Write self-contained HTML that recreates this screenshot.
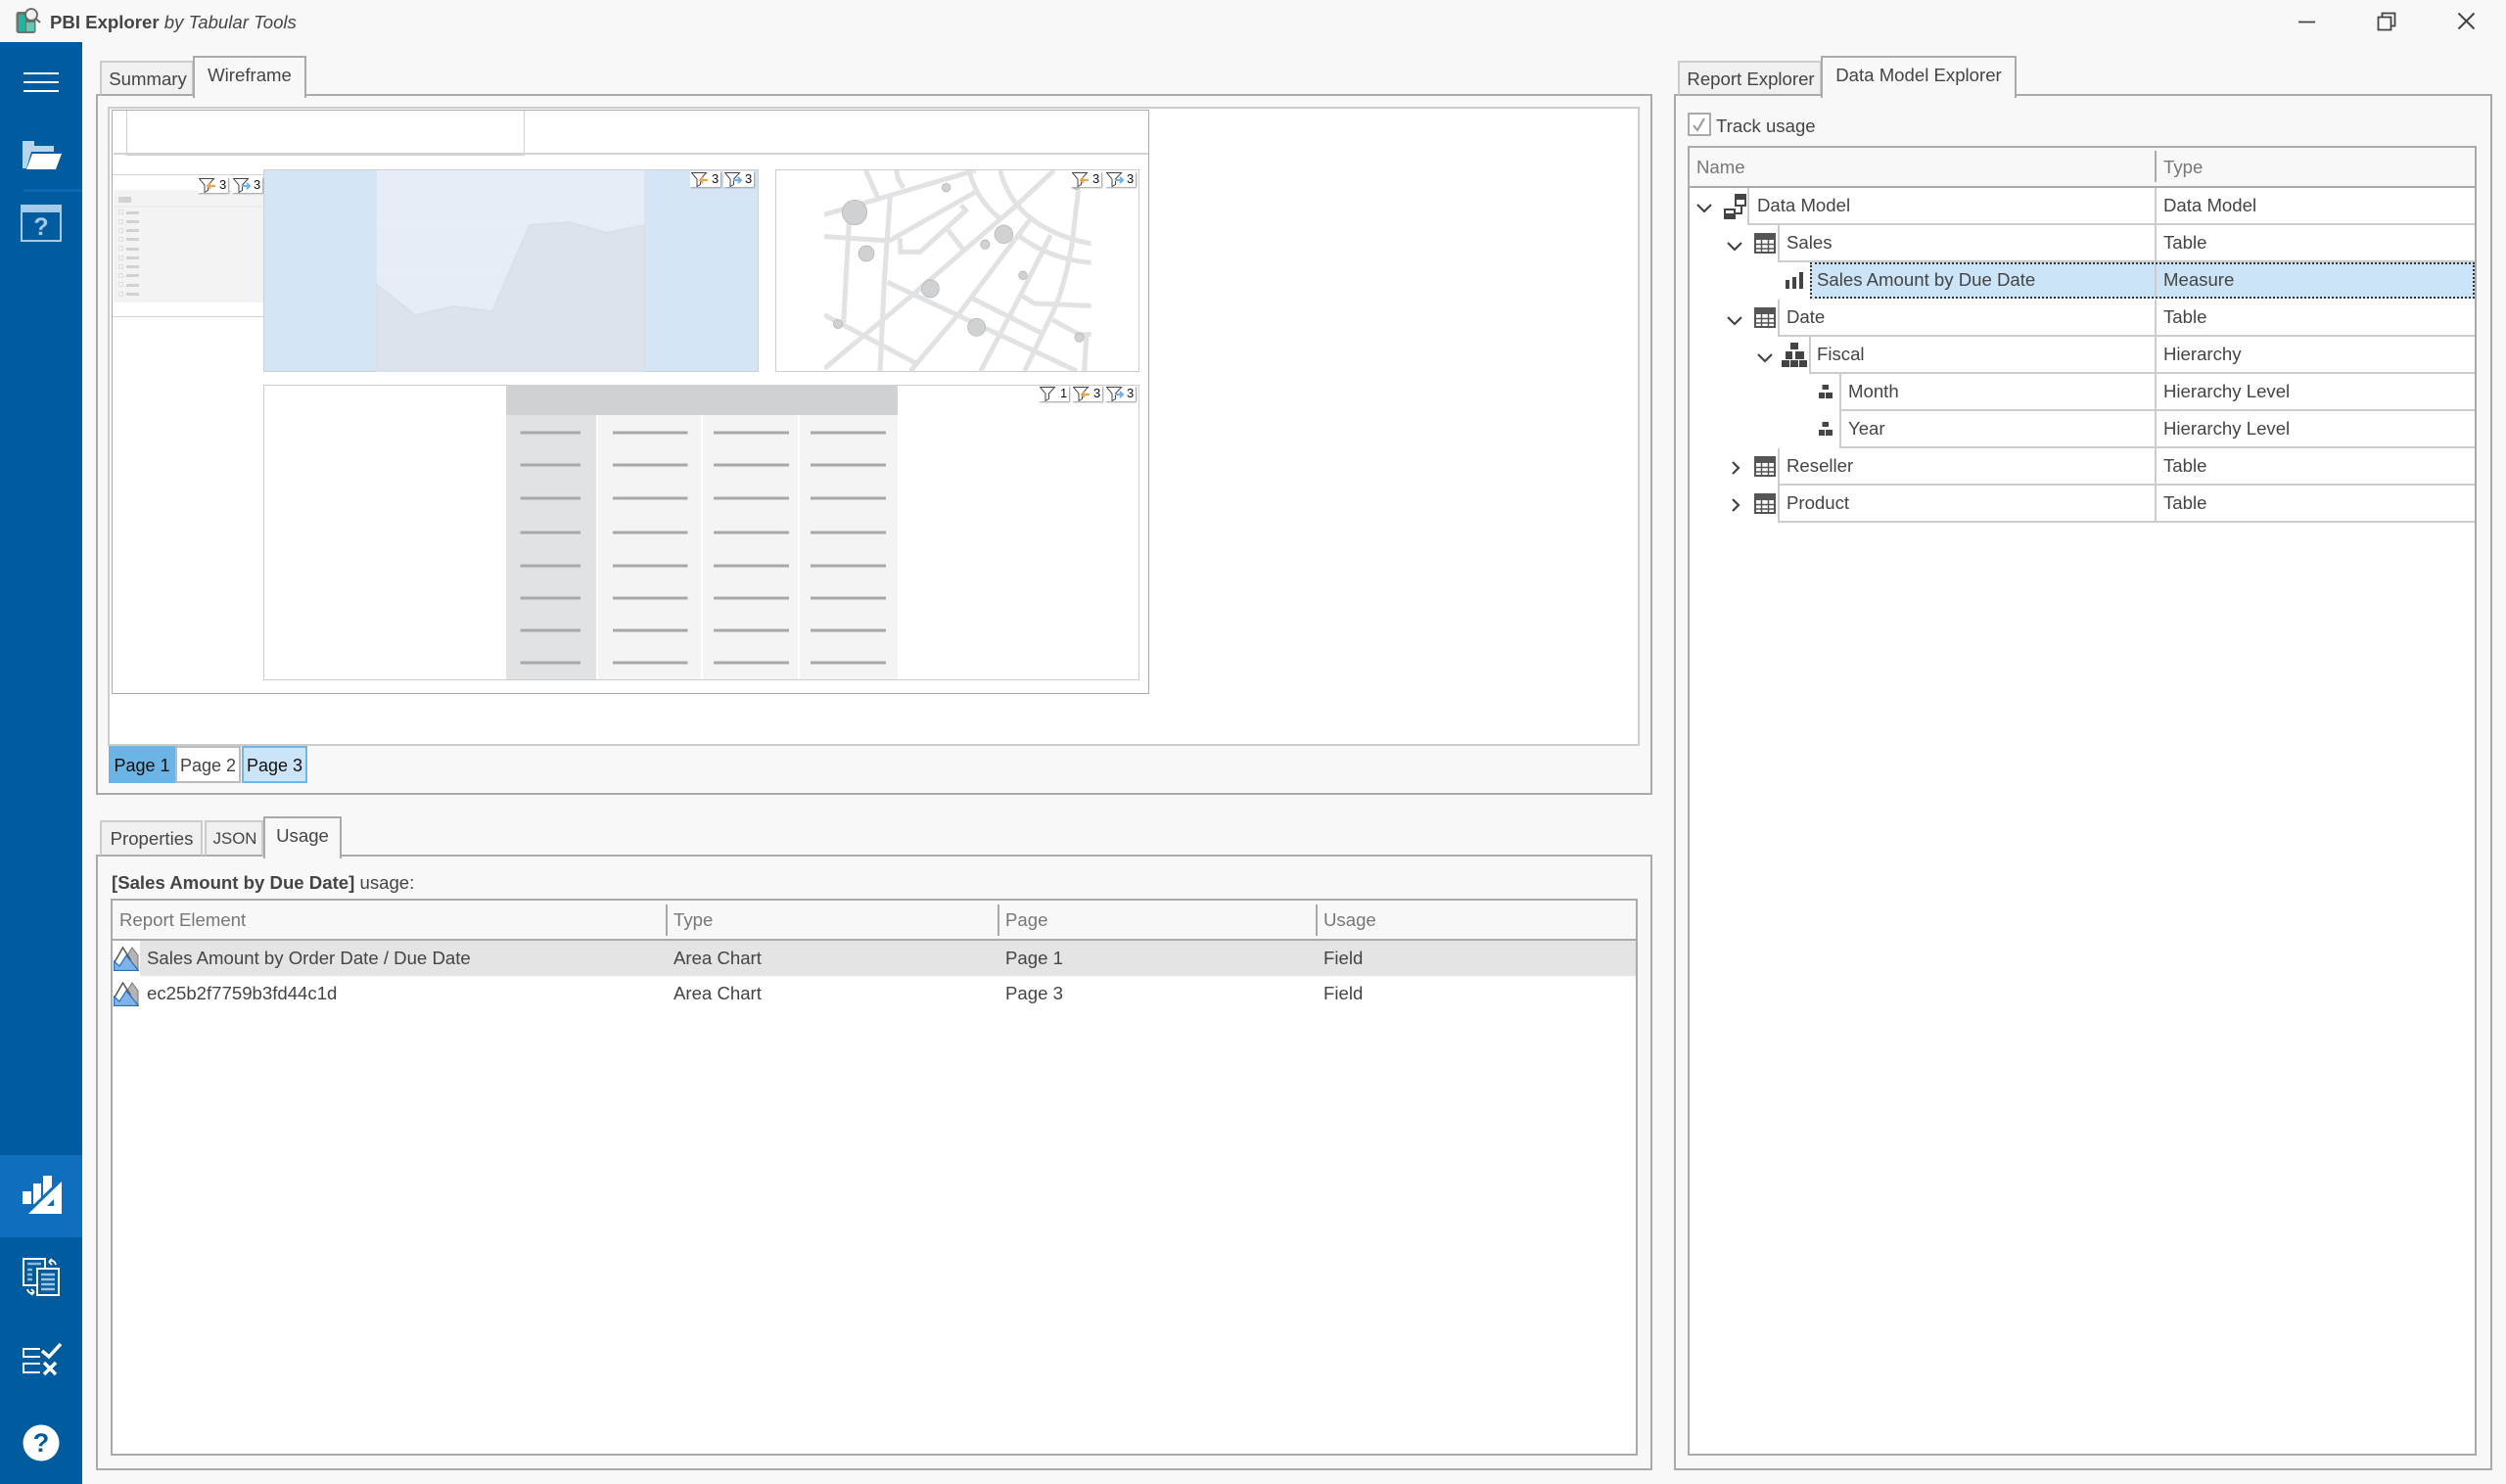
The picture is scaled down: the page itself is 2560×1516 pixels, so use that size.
<!DOCTYPE html>
<html><head><meta charset="utf-8"><title>PBI Explorer</title>
<style>
html,body{margin:0;padding:0;background:#f8f8f8}
#r{position:relative;width:2560px;height:1516px;overflow:hidden;background:#f8f8f8;font-family:"Liberation Sans",sans-serif;font-size:18.6px;color:#444}
#r div,#r svg,#r span.t{position:absolute;box-sizing:border-box}
.t{white-space:nowrap;line-height:26px;height:26px}
.h{color:#777}
.bx{border:2px solid #aaa}
.tab{background:#f0f0f0;border:2px solid #ccc;border-bottom:none;text-align:center;white-space:nowrap}
.tab.a{background:#f8f8f8;border:2.5px solid #aaa;border-bottom:none;z-index:3;line-height:36px;height:43px}
.w{background:#fff}
.b{width:31px;height:16px;background:#fff;box-shadow:1px 1px 1.5px #999;font-size:13px;line-height:16px;color:#111;z-index:4}
.b svg{left:1px;top:1px;width:22px;height:15px}
.b span{position:absolute;left:22px;top:0}
.l{height:3px;background:#a8a8a8}
.c{border-bottom:2px solid #ccc;border-left:2px solid #ccc;height:38px;background:#fff}
.s1{width:5px;height:5px;border:1px solid #ddd;left:121px}
.s2{width:13px;height:3px;background:#d2d2d2;left:129px}
</style></head><body><div id="r">
<svg width="0" height="0" style="left:0;top:0"><defs>
<g id="fl"><path d="M.5 .5H15.5L9.5 7V12.5L6 14.5V7Z" fill="#fff" stroke="#444" stroke-width="1"/></g>
<g id="tb"><rect x="1" y="1" width="20" height="19" fill="#fff" stroke="#555" stroke-width="2"/><rect x="1" y="1" width="20" height="6" fill="#555"/><path d="M7.5 7V20M14.5 7V20M1 11.5H21M1 16H21" stroke="#555" stroke-width="1.5" fill="none"/></g>
<g id="ar"><path d="M12 12L19 1L25 9V24H12Z" fill="#b4b4b4" stroke="#777"/><path d="M1 16L9.5 1L17 13V24H1Z" fill="#fff" stroke="#555" stroke-width="1.5"/><path d="M.5 24.5V15L6 20L13 9L25.500 24.500Z" fill="#7fb4e8" stroke="#2b6cb4" stroke-width="1.2"/></g>
<g id="lv"><path d="M3.500 0H10V5H3.500ZM0 8H6V14H0ZM7 8H14V14H7Z" fill="#444"/></g>
</defs></svg>

<!-- title bar -->
<svg style="left:14px;top:6px;width:30px;height:30px" viewBox="0 0 30 30"><rect x="2.500" y="6" width="20" height="22" rx="2.500" fill="#69736f"/><rect x="5" y="9" width="7" height="17" fill="#1fb49d"/><rect x="13" y="17" width="8" height="9" fill="#63c7b2"/><circle cx="18" cy="9" r="6" fill="#f0f0f0" stroke="#666" stroke-width="1.800"/><path d="M22.500 13L27 17" stroke="#666" stroke-width="2"/></svg>
<span class="t" style="left:51px;top:10px"><b>PBI Explorer</b> <i>by Tabular Tools</i></span>
<svg style="left:2340px;top:8px;width:200px;height:30px" viewBox="0 0 200 30" fill="none" stroke="#444" stroke-width="1.800"><path d="M8 14.500H25"/><path d="M89.500 9.500H102.500V22.500H89.500ZM93.500 9.500V5.500H106.500V18.500H102.500"/><path d="M171.500 5.500L187.500 21.500M187.500 5.500L171.500 21.500" stroke-width="2"/></svg>

<!-- sidebar -->
<div style="left:0;top:43px;width:84px;height:1473px;background:#005b9f"></div>
<div style="left:24px;top:74px;width:36px;height:2px;background:#fff"></div>
<div style="left:24px;top:83px;width:36px;height:2px;background:#fff"></div>
<div style="left:24px;top:92px;width:36px;height:2px;background:#fff"></div>
<svg style="left:20px;top:140px;width:46px;height:36px" viewBox="20 140 46 36"><path d="M23 144H35V149H55V155H32L27 172H23Z" fill="#b9d5ea"/><path d="M33 157H63L57 173H27Z" fill="#fff"/></svg>
<div style="left:24px;top:193px;width:60px;height:2.500px;background:#0f68b4"></div>
<div style="left:21px;top:209px;width:42px;height:38px;border:2px solid #a5cbea;background:#005b9f"></div>
<div style="left:21px;top:209px;width:42px;height:8px;background:#a5cbea"></div>
<div style="left:21px;top:217px;width:42px;height:30px;color:#a5cbea;font-weight:bold;font-size:25px;line-height:31px;text-align:center">?</div>
<div style="left:0;top:1180px;width:84px;height:84px;background:#106ebe"></div>
<svg style="left:0;top:1180px;width:84px;height:336px" viewBox="0 1180 84 336">
<path d="M23 1217H32V1230H23ZM34 1209H42V1230H34ZM44 1201H53V1225H44Z" fill="#fff"/>
<path d="M29 1240L63 1207V1240Z" fill="#106ebe" stroke="#106ebe" stroke-width="6"/>
<path d="M29 1240L63 1207V1240Z" fill="#fff"/><path d="M48 1232L55 1225V1232Z" fill="#106ebe"/>
<rect x="24" y="1286" width="22" height="27" fill="#005b9f" stroke="#fff" stroke-width="2"/>
<path d="M28 1291H42M28 1297H33M28 1302H33M28 1307H33" stroke="#8fb9dc" stroke-width="2.500"/>
<rect x="38" y="1296" width="22" height="27" fill="#005b9f" stroke="#fff" stroke-width="2"/>
<path d="M42 1302H56M42 1307H56M42 1312H56M42 1317H56" stroke="#9fc4e2" stroke-width="2.500"/>
<path d="M50 1289C53 1287 56 1288 57 1292M50 1289L53 1286M50 1289L53 1292" stroke="#fff" stroke-width="1.800" fill="none"/>
<path d="M35 1320C32 1322 29 1321 28 1317M35 1320L32 1317M35 1320L32 1323" stroke="#fff" stroke-width="1.800" fill="none"/>
<path d="M41 1378H24V1386H41M41 1393H24V1402H41" stroke="#fff" stroke-width="2" fill="none"/>
<path d="M43 1380L50 1386L62 1373M45 1392L57 1404M57 1392L45 1404" stroke="#fff" stroke-width="3.500" fill="none"/>
<circle cx="42" cy="1474" r="18.500" fill="#fff"/>
</svg>
<div style="left:23px;top:1459px;width:38px;height:30px;color:#005b9f;font-weight:bold;font-size:27px;line-height:30px;text-align:center">?</div>

<!-- top-left tabs & panel -->
<div class="bx" style="left:98px;top:96px;width:1590px;height:716px;border-width:2.500px"></div>
<div class="tab" style="left:102px;top:62px;width:96px;height:36px;line-height:33px;padding-left:2px;border-bottom:2.500px solid #aaa">Summary</div>
<div class="tab a" style="left:197px;top:57px;width:116px">Wireframe</div>
<div style="left:110px;top:109px;width:1565px;height:653px;background:#fff;border:2px solid #ccc"></div>

<!-- page -->
<div style="left:114px;top:112px;width:1060px;height:597px;background:#fff;border:1.500px solid #aaa"></div>
<div style="left:116px;top:156px;width:1057px;height:1.500px;background:#d2d2d2"></div>
<div style="left:129px;top:113px;width:407px;height:46px;border:1.500px solid #d2d2d2;border-top:none"></div>

<!-- slicer -->
<div style="left:115px;top:178px;width:155px;height:146px;border-top:1.500px solid #d2d2d2;border-bottom:1.500px solid #d2d2d2;background:#fff"></div>
<div style="left:116px;top:194px;width:153px;height:115px;background:#f3f3f3"></div>
<div style="left:116px;top:210px;width:153px;height:2px;background:#ececec"></div>
<div style="left:121px;top:201px;width:13px;height:6px;background:#d2d2d2"></div>
<div class="s1" style="top:214px"></div><div class="s2" style="top:216px"></div>
<div class="s1" style="top:224px"></div><div class="s2" style="top:225px"></div>
<div class="s1" style="top:233px"></div><div class="s2" style="top:234px"></div>
<div class="s1" style="top:242px"></div><div class="s2" style="top:243px"></div>
<div class="s1" style="top:251px"></div><div class="s2" style="top:253px"></div>
<div class="s1" style="top:261px"></div><div class="s2" style="top:262px"></div>
<div class="s1" style="top:270px"></div><div class="s2" style="top:271px"></div>
<div class="s1" style="top:279px"></div><div class="s2" style="top:280px"></div>
<div class="s1" style="top:288px"></div><div class="s2" style="top:290px"></div>
<div class="s1" style="top:298px"></div><div class="s2" style="top:299px"></div>
<div class="b" style="left:202px;top:181px"><svg viewBox="0 0 22 15"><use href="#fl"/><path d="M17 8H9M12 5L9 8L12 11" stroke="#e9a44c" stroke-width="2" fill="none"/></svg><span>3</span></div>
<div class="b" style="left:237px;top:181px"><svg viewBox="0 0 22 15"><use href="#fl"/><path d="M9 8H17M14 5L17 8L14 11" stroke="#6fb0ee" stroke-width="2" fill="none"/></svg><span>3</span></div>

<!-- area chart -->
<svg style="left:269px;top:173px;width:506px;height:207px" viewBox="269 173 506 207">
<rect x="269.500" y="173.500" width="505" height="206" fill="#d6e5f5" stroke="#c9d0d8"/>
<rect x="385" y="174" width="273" height="205" fill="#e6edf6"/>
<path d="M385 225H658M385 274H658" stroke="#ebf0f8" stroke-width="1"/>
<path d="M385 291L424.500 322L463 313L503 318L541 230L582 227L620 238L658 230V379H385Z" fill="#dce3ed" stroke="#d8e0ea" stroke-width="2"/>
</svg>
<div class="b" style="left:705px;top:175px"><svg viewBox="0 0 22 15"><use href="#fl"/><path d="M17 8H9M12 5L9 8L12 11" stroke="#e9a44c" stroke-width="2" fill="none"/></svg><span>3</span></div>
<div class="b" style="left:739px;top:175px"><svg viewBox="0 0 22 15"><use href="#fl"/><path d="M9 8H17M14 5L17 8L14 11" stroke="#6fb0ee" stroke-width="2" fill="none"/></svg><span>3</span></div>

<!-- map -->
<div style="left:792px;top:173px;width:372px;height:207px;border:1.500px solid #ccc;background:#fff"></div>
<svg style="left:780px;top:160px;width:400px;height:230px" viewBox="0 0 1200 690">
<clipPath id="mc"><rect x="186" y="42" width="818" height="615"/></clipPath>
<g clip-path="url(#mc)" fill="none" stroke="#e1e2e4" stroke-width="15">
<path d="M186 178L650 42"/><path d="M313 42L350 125"/><path d="M408 42Q408 70 430 95"/>
<path d="M388 120L370 380L357 657"/><path d="M262 200L245 510"/>
<path d="M186 245L385 258L650 108"/><path d="M605 148L620 165L480 292H420L418 250"/><path d="M565 225L612 285"/>
<path d="M186 650L455 425L780 145L890 42"/><path d="M630 42Q650 130 725 190"/><path d="M725 42Q770 220 1004 267"/>
<path d="M815 195L600 480L450 657"/><path d="M880 240L790 420L665 657"/><path d="M785 245Q880 315 1004 325"/>
<path d="M965 100L945 270Q920 410 885 480L800 657"/><path d="M380 385L960 657"/><path d="M635 432L860 545"/>
<path d="M790 425L830 450L1004 457"/><path d="M885 500L968 545H1004"/><path d="M990 545L983 657"/><path d="M186 485L465 632"/>
</g>
<g fill="#d0d1d3" stroke="#b0b0b0" stroke-width="2"><circle cx="279" cy="171" r="38"/><circle cx="315" cy="297" r="24"/><circle cx="560" cy="95" r="13"/><circle cx="736" cy="238" r="28"/><circle cx="679" cy="269" r="14"/><circle cx="795" cy="364" r="13"/><circle cx="511" cy="405" r="27"/><circle cx="653" cy="523" r="27"/><circle cx="228" cy="513" r="14"/><circle cx="968" cy="554" r="14"/><circle cx="958" cy="88" r="13"/></g>
</svg>
<div class="b" style="left:1094px;top:175px"><svg viewBox="0 0 22 15"><use href="#fl"/><path d="M17 8H9M12 5L9 8L12 11" stroke="#e9a44c" stroke-width="2" fill="none"/></svg><span>3</span></div>
<div class="b" style="left:1129px;top:175px"><svg viewBox="0 0 22 15"><use href="#fl"/><path d="M9 8H17M14 5L17 8L14 11" stroke="#6fb0ee" stroke-width="2" fill="none"/></svg><span>3</span></div>

<!-- matrix -->
<div style="left:269px;top:393px;width:895px;height:302px;border:1.500px solid #ccc;background:#fff"></div>
<div style="left:517px;top:393px;width:400px;height:31px;background:#d0d1d3"></div>
<div style="left:517px;top:424px;width:92px;height:270px;background:#e1e2e4"></div>
<div style="left:611px;top:424px;width:105px;height:270px;background:#f4f4f4"></div>
<div style="left:718px;top:424px;width:97px;height:270px;background:#f4f4f4"></div>
<div style="left:817px;top:424px;width:100px;height:270px;background:#f4f4f4"></div>
<svg style="left:517px;top:424px;width:400px;height:270px" viewBox="517 424 400 270"><path d="M531.500 442H593M626 442H702.500M729 442H806M828 442H905M531.500 475H593M626 475H702.500M729 475H806M828 475H905M531.500 509H593M626 509H702.500M729 509H806M828 509H905M531.500 544H593M626 544H702.500M729 544H806M828 544H905M531.500 578H593M626 578H702.500M729 578H806M828 578H905M531.500 611H593M626 611H702.500M729 611H806M828 611H905M531.500 644H593M626 644H702.500M729 644H806M828 644H905M531.500 677H593M626 677H702.500M729 677H806M828 677H905" stroke="#a8a8a8" stroke-width="3" fill="none"/></svg>
<div class="b" style="left:1061px;top:394px"><svg viewBox="0 0 22 15"><use href="#fl"/></svg><span>1</span></div>
<div class="b" style="left:1095px;top:394px"><svg viewBox="0 0 22 15"><use href="#fl"/><path d="M17 8H9M12 5L9 8L12 11" stroke="#e9a44c" stroke-width="2" fill="none"/></svg><span>3</span></div>
<div class="b" style="left:1129px;top:394px"><svg viewBox="0 0 22 15"><use href="#fl"/><path d="M9 8H17M14 5L17 8L14 11" stroke="#6fb0ee" stroke-width="2" fill="none"/></svg><span>3</span></div>

<!-- page tabs -->
<div style="left:111px;top:762px;width:68px;height:38px;background:#6bb4e6;color:#111;text-align:center;line-height:40px;font-size:18px">Page 1</div>
<div style="left:179px;top:762px;width:67px;height:38px;background:#fff;border:2px solid #bbb;text-align:center;line-height:36px;font-size:18px">Page 2</div>
<div style="left:247px;top:762px;width:67px;height:38px;background:#cce4f7;border:2px solid #6fb5e8;color:#111;text-align:center;line-height:36px;font-size:18px">Page 3</div>

<!-- lower-left panel -->
<div class="bx" style="left:98px;top:873px;width:1590px;height:629px;border-width:2.500px"></div>
<div class="tab" style="left:102px;top:838px;width:105px;height:37px;line-height:33px;padding-left:1px;border-bottom:2.500px solid #aaa">Properties</div>
<div class="tab" style="left:209px;top:838px;width:60px;height:37px;line-height:33px;padding-left:2px;font-size:16.8px;border-bottom:2.500px solid #aaa">JSON</div>
<div class="tab a" style="left:269px;top:834px;width:80px">Usage</div>
<span class="t" style="left:114px;top:889px"><b>[Sales Amount by Due Date]</b> usage:</span>
<div class="w bx" style="left:113px;top:918px;width:1560px;height:569px"></div>
<div style="left:115px;top:920px;width:1556px;height:39px;background:#f8f8f8"></div>
<div style="left:115px;top:959px;width:1556px;height:2px;background:#aaa"></div>
<div style="left:680px;top:924px;width:2px;height:32px;background:#aaa"></div>
<div style="left:1019px;top:924px;width:2px;height:32px;background:#aaa"></div>
<div style="left:1344px;top:924px;width:2px;height:32px;background:#aaa"></div>
<span class="t h" style="left:122px;top:927px">Report Element</span>
<span class="t h" style="left:688px;top:927px">Type</span>
<span class="t h" style="left:1027px;top:927px">Page</span>
<span class="t h" style="left:1352px;top:927px">Usage</span>
<div style="left:143px;top:961px;width:1528px;height:36px;background:#e4e4e4"></div>
<svg style="left:116px;top:967px;width:26px;height:25px" viewBox="0 0 26 25"><use href="#ar"/></svg>
<svg style="left:116px;top:1003px;width:26px;height:25px" viewBox="0 0 26 25"><use href="#ar"/></svg>
<span class="t" style="left:150px;top:966px">Sales Amount by Order Date / Due Date</span>
<span class="t" style="left:688px;top:966px">Area Chart</span>
<span class="t" style="left:1027px;top:966px">Page 1</span>
<span class="t" style="left:1352px;top:966px">Field</span>
<span class="t" style="left:150px;top:1002px">ec25b2f7759b3fd44c1d</span>
<span class="t" style="left:688px;top:1002px">Area Chart</span>
<span class="t" style="left:1027px;top:1002px">Page 3</span>
<span class="t" style="left:1352px;top:1002px">Field</span>

<!-- right panel -->
<div class="bx" style="left:1710px;top:96px;width:836px;height:1406px;border-width:2.500px"></div>
<div class="tab" style="left:1714px;top:62px;width:147px;height:36px;line-height:33px;padding-left:2px;border-bottom:2.500px solid #aaa">Report Explorer</div>
<div class="tab a" style="left:1860px;top:57px;width:200px">Data Model Explorer</div>
<div style="left:1724px;top:115px;width:24px;height:24px;background:#fff;border:2px solid #aaa"></div>
<svg style="left:1724px;top:115px;width:24px;height:24px" viewBox="0 0 24 24"><path d="M6 13L10 18L17 6" fill="none" stroke="#999" stroke-width="2"/></svg>
<span class="t" style="left:1753px;top:116px">Track usage</span>
<div class="w bx" style="left:1724px;top:149px;width:806px;height:1338px"></div>
<div style="left:1726px;top:151px;width:802px;height:39px;background:#f8f8f8"></div>
<div style="left:1726px;top:190px;width:802px;height:2px;background:#aaa"></div>
<div style="left:2201px;top:154px;width:2px;height:32px;background:#aaa"></div>
<span class="t h" style="left:1733px;top:158px">Name</span>
<span class="t h" style="left:2210px;top:158px">Type</span>

<!-- tree rows -->
<div class="c" style="left:1785px;top:192px;width:417px"></div><div class="c" style="left:2201px;top:192px;width:327px"></div>
<div class="c" style="left:1816px;top:230px;width:386px"></div><div class="c" style="left:2201px;top:230px;width:327px"></div>
<div style="left:1849px;top:268px;width:679px;height:37px;background:#cce4f7;border:2px dotted #333"></div>
<div style="left:2201px;top:270px;width:2px;height:33px;background:#ccc"></div>
<div class="c" style="left:1816px;top:306px;width:386px"></div><div class="c" style="left:2201px;top:306px;width:327px"></div>
<div class="c" style="left:1848px;top:344px;width:354px"></div><div class="c" style="left:2201px;top:344px;width:327px"></div>
<div class="c" style="left:1879px;top:382px;width:323px"></div><div class="c" style="left:2201px;top:382px;width:327px"></div>
<div class="c" style="left:1879px;top:420px;width:323px"></div><div class="c" style="left:2201px;top:420px;width:327px"></div>
<div class="c" style="left:1816px;top:458px;width:386px"></div><div class="c" style="left:2201px;top:458px;width:327px"></div>
<div class="c" style="left:1816px;top:496px;width:386px"></div><div class="c" style="left:2201px;top:496px;width:327px"></div>

<span class="t" style="left:1795px;top:197px">Data Model</span><span class="t" style="left:2210px;top:197px">Data Model</span>
<span class="t" style="left:1825px;top:235px">Sales</span><span class="t" style="left:2210px;top:235px">Table</span>
<span class="t" style="left:1856px;top:273px">Sales Amount by Due Date</span><span class="t" style="left:2210px;top:273px">Measure</span>
<span class="t" style="left:1825px;top:311px">Date</span><span class="t" style="left:2210px;top:311px">Table</span>
<span class="t" style="left:1856px;top:349px">Fiscal</span><span class="t" style="left:2210px;top:349px">Hierarchy</span>
<span class="t" style="left:1888px;top:387px">Month</span><span class="t" style="left:2210px;top:387px">Hierarchy Level</span>
<span class="t" style="left:1888px;top:425px">Year</span><span class="t" style="left:2210px;top:425px">Hierarchy Level</span>
<span class="t" style="left:1825px;top:463px">Reseller</span><span class="t" style="left:2210px;top:463px">Table</span>
<span class="t" style="left:1825px;top:501px">Product</span><span class="t" style="left:2210px;top:501px">Table</span>

<!-- tree icons -->
<svg style="left:1726px;top:192px;width:160px;height:342px" viewBox="1726 192 160 342">
<g fill="none" stroke="#444" stroke-width="2.200"><path d="M1734 209L1741 216L1748 209"/><path d="M1765 248L1772 255L1779 248"/><path d="M1765 324L1772 331L1779 324"/><path d="M1796 362L1803 369L1810 362"/><path d="M1770 472L1776 478L1770 484"/><path d="M1770 510L1776 516L1770 522"/></g>
<rect x="1773" y="199" width="10" height="11" fill="#fff" stroke="#444" stroke-width="2"/><rect x="1773" y="199" width="10" height="5" fill="#444"/>
<rect x="1762" y="214" width="10" height="9" fill="#fff" stroke="#444" stroke-width="2"/><rect x="1762" y="218" width="10" height="5" fill="#444"/>
<path d="M1779 210V218H1772" fill="none" stroke="#444" stroke-width="2"/>
<use href="#tb" x="1792" y="238"/><use href="#tb" x="1792" y="314"/><use href="#tb" x="1792" y="466"/><use href="#tb" x="1792" y="504"/>
<path d="M1824 286H1828V295H1824ZM1831 283H1835V295H1831ZM1838 278H1842V295H1838Z" fill="#444"/>
<path d="M1829 350H1837V357H1829ZM1824 359H1831V367H1824ZM1834 359H1843V367H1834ZM1820 368H1828V375H1820ZM1829 368H1837V375H1829ZM1838 368H1846V375H1838Z" fill="#444"/>
<use href="#lv" x="1858" y="393"/><use href="#lv" x="1858" y="431"/>
</svg>
</div></body></html>
